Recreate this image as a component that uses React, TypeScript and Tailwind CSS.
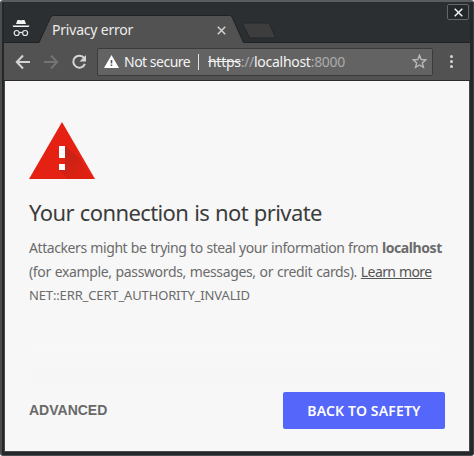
import React from "react";

function Incognito() {
  return (
    <svg className="mt-[17px] ml-[8px] h-[18px] w-[18px] shrink-0" viewBox="0 0 18 18" fill="none">
      <path d="M5.500 1h2.200l1.300.5L10.300 1H12.500l1.500 4H4z M0.500 6.500h17l-.8 1.500H1.300z" fill="#f5f5f5" />
      <circle cx="4.700" cy="14" r="2.500" stroke="#e8e8e8" strokeWidth="1.200" />
      <circle cx="13.100" cy="14" r="2.500" stroke="#e8e8e8" strokeWidth="1.200" />
      <path d="M7.200 13.800q1.700-1 3.400 0" stroke="#e8e8e8" strokeWidth="1.200" />
    </svg>
  );
}

function TabStrip() {
  return (
    <div className="relative flex h-[41px] shrink-0 bg-[#2b2f32]">
      <svg className="absolute top-0 left-0 h-[41px] w-[466px]" viewBox="4 2 466 41" fill="none">
        <path d="M39 43L50.500 17.500Q51.500 15.500 53.500 15.500H229.500Q231.300 15.500 232 17L243.500 43z" fill="#525252" />
        <path d="M4 42.500H39L50.500 17.500Q51.500 15.500 53.500 15.500H229.500Q231.300 15.500 232 17L243.500 42.500H470" stroke="#202224" />
        <path d="M243.500 23H267Q269 23 269.700 24.500L275 36Q275.500 38 274 38H252Q250 38 249 36.500L243 24.500Q242.500 23 243.500 23z" fill="#3d3d3d" stroke="#242628" />
      </svg>
      <Incognito />
      <span className="relative mt-[18px] ml-[22px] w-[165px] text-[14px] leading-[20px] tracking-[-0.2px] whitespace-nowrap text-[#ececec]">Privacy error</span>
      <svg className="relative mt-[23.500px] h-[9px] w-[9px]" viewBox="0 0 9 9" stroke="#cfcfcf" strokeWidth="1.600">
        <path d="M.8.8l7.400 7.400M8.200.8L.8 8.200" />
      </svg>
      <button className="absolute top-[2px] left-[443px] flex h-[16px] w-[22px] items-center justify-center rounded-[2px] border border-[#646668] bg-[#25282a]">
        <svg className="h-[9px] w-[9px]" viewBox="0 0 9 9" stroke="#f0f0f0" strokeWidth="1.500">
          <path d="M.7.7l7.600 7.600M8.300.7L.7 8.300" />
        </svg>
      </button>
    </div>
  );
}

function Toolbar() {
  return (
    <div className="flex h-[38px] shrink-0 items-center border-b border-[#2c2a2a] bg-[#525252]">
      <svg className="ml-[11px] h-[16px] w-[16px]" viewBox="0 0 16 16" fill="none" stroke="#d5d5d5" strokeWidth="2">
        <path d="M15 8H2M8 1.500L1.800 8 8 14.500" />
      </svg>
      <svg className="ml-[12px] h-[16px] w-[16px]" viewBox="0 0 16 16" fill="none" stroke="#747474" strokeWidth="2">
        <path d="M1 8h13M8 1.500L14.200 8 8 14.500" />
      </svg>
      <svg className="ml-[12px] h-[16px] w-[16px]" viewBox="0 0 16 16" fill="none">
        <path d="M13.200 4.200A6 6 0 1 0 13.900 9.800" stroke="#d5d5d5" strokeWidth="2" />
        <path d="M15 1v6.500H8.500z" fill="#d5d5d5" />
      </svg>
      <div className="ml-[10px] flex h-[28px] w-[336px] items-center rounded-[2px] border border-[#3b3b3b] bg-[#636363] text-[14px] leading-[20px] whitespace-nowrap">
        <svg className="ml-[6px] h-[13px] w-[15px]" viewBox="0 0 15 13">
          <path d="M7.500 0L15 13H0z" fill="#fff" />
          <path d="M6.700 5h1.600v3.500H6.700zM6.700 9.500h1.600v1.600H6.700z" fill="#555" />
        </svg>
        <span className="ml-[5px] w-[74px] tracking-[-0.5px] text-[#f4f4f4]">Not secure</span>
        <span className="h-[16px] w-px bg-[#e4e4e4]" />
        <span className="ml-[9px] w-[203.500px] tracking-[-0.28px] text-[#ababab]">
          <span className="text-[#f2f2f2] line-through">https</span>://<span className="text-[#f4f4f4]">localhost</span>:8000
        </span>
        <svg className="h-[15px] w-[15px]" viewBox="0 0 15 15" fill="none">
          <path d="M7.500 1.300L9.200 5.500 13.800 5.900 10.300 8.900 11.400 13.300 7.500 11 3.600 13.300 4.700 8.900 1.200 5.900 5.800 5.500z" stroke="#b8b8b8" strokeWidth="1.400" />
        </svg>
      </div>
      <div className="ml-[17px] flex flex-col gap-[2px]">
        <span className="h-[3px] w-[3px] rounded-full bg-[#d5d5d5]" />
        <span className="h-[3px] w-[3px] rounded-full bg-[#d5d5d5]" />
        <span className="h-[3px] w-[3px] rounded-full bg-[#d5d5d5]" />
      </div>
    </div>
  );
}

function WarningIcon() {
  return (
    <svg className="h-[57px] w-[66px]" viewBox="0 0 66 57">
      <defs>
        <linearGradient id="shade" x1="30" y1="24" x2="56" y2="50" gradientUnits="userSpaceOnUse">
          <stop stopColor="#b9241a" />
          <stop offset="1" stopColor="#df2010" />
        </linearGradient>
      </defs>
      <path d="M33 0L66 57H0z" fill="#e42112" />
      <path d="M36 24L51.500 37 62.500 57H39L30 48 36 42z" fill="url(#shade)" />
      <path d="M30 24h6v12h-6zM30 42h6v6h-6z" fill="#fff" />
    </svg>
  );
}

export default function App() {
  return (
    <div className="h-[456px] w-[474px] bg-white font-['Noto_Sans',sans-serif]">
      <div className="flex h-[456px] w-[474px] flex-col rounded-[3px] border-t-2 border-r border-b border-l-2 border-t-[#5a5c5d] border-r-[#3c3f41] border-b-[#4b4e50] border-l-[#4b4c4d] bg-[#25282a] pr-[3px] pb-[3px] pl-[2px]">
        <TabStrip />
        <Toolbar />
        <main className="flex min-h-0 flex-1 flex-col border-r border-b border-l border-[#484848] bg-[#f7f7f7] px-[24px] pt-[41px] whitespace-nowrap">
          <WarningIcon />
          <h1 className="mt-[18px] text-[22px] leading-[30px] tracking-[-0.6px] [word-spacing:0.7px] text-[#3c3c3c]">Your connection is not private</h1>
          <div className="mt-[9px] text-[14px] leading-[24px] text-[#6b6b6b]">
            <p className="tracking-[-0.42px] [word-spacing:0.4px]">Attackers might be trying to steal your information from <b>localhost</b></p>
            <p className="tracking-[-0.36px] [word-spacing:0.600px]">(for example, passwords, messages, or credit cards). <a className="tracking-[-0.6px] text-[#555] underline">Learn more</a></p>
            <p className="text-[13px] leading-[22px] tracking-[-0.14px]">NET::ERR_CERT_AUTHORITY_INVALID</p>
          </div>
          <div className="mt-[40px] h-[36px] bg-linear-to-b from-[#f8f8f8] to-[#f6f6f6]" />
          <div className="mt-[10px] flex h-[37px] items-center justify-between">
            <button className="font-['Liberation_Sans',sans-serif] text-[14px] font-bold text-[#696969]">ADVANCED</button>
            <button className="h-[37px] w-[162px] rounded-[2px] bg-[#5566fa] text-[14px] font-semibold tracking-[0.15px] text-white">BACK TO SAFETY</button>
          </div>
        </main>
      </div>
    </div>
  );
}
